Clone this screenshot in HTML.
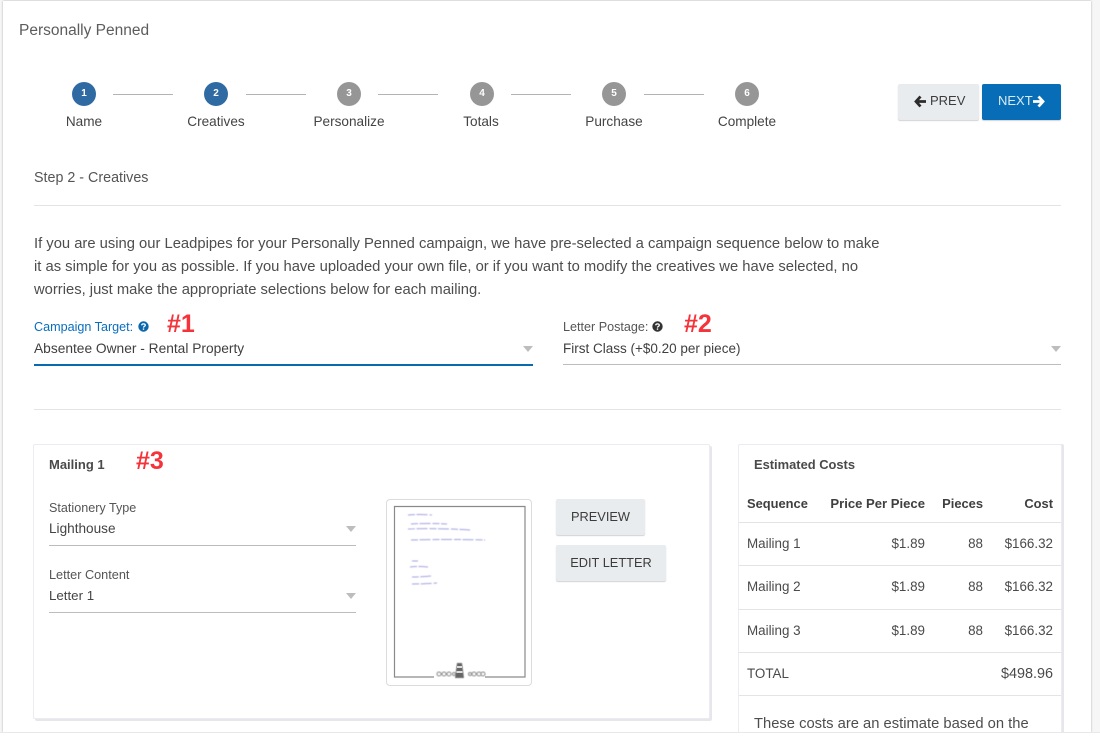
<!DOCTYPE html>
<html><head><meta charset="utf-8"><style>
html,body{margin:0;padding:0;width:1100px;height:738px;overflow:hidden;background:#fff}
body{position:relative;font-family:"Liberation Sans",sans-serif;color:#4a4a4a;font-size:13.5px}
.a{position:absolute;white-space:nowrap;line-height:16px}
.b{position:absolute}
.c{position:absolute;width:24px;height:24px;border-radius:50%;top:82px;color:#fff;font-size:10px;font-weight:bold;text-align:center;line-height:23px}
.l{position:absolute;top:94px;width:60px;height:1px;background:#b3b3b3}
.s{width:100px;text-align:center;top:114px;color:#444;font-size:13.6px}
.h{height:1px;background:#e4e4e6}
.tri{position:absolute;width:0;height:0;border-left:5.5px solid transparent;border-right:5.5px solid transparent;border-top:6px solid #bdbdbd}
.btn{position:absolute;background:#e9ecef;border-radius:2px;box-shadow:0 1px 1px rgba(0,0,0,.18);color:#3c3c3c;font-size:12.8px;text-align:center;height:36px;line-height:35px}
.r{text-align:right}
.th{font-weight:bold;color:#3f3f3f;top:496px;font-size:12.9px}
.td{color:#4a4a4a;font-size:13.4px}
.red{color:#f5333a;font-weight:bold;font-size:25px;line-height:28px}
</style></head><body>
<div class="b" style="left:0;top:0;width:1100px;height:738px;background:#f6f6f7"></div>
<div class="b" style="left:3px;top:1px;width:1088px;height:731px;background:#fff;box-shadow:0 0 2px rgba(0,0,0,.3)"></div>

<div class="a" style="left:19px;top:23px;font-size:15.5px;color:#5c5c5c">Personally Penned</div>

<div class="c" style="left:72px;background:#2f6aa3">1</div>
<div class="c" style="left:204px;background:#2f6aa3">2</div>
<div class="c" style="left:337px;background:#969696">3</div>
<div class="c" style="left:470px;background:#969696">4</div>
<div class="c" style="left:602px;background:#969696">5</div>
<div class="c" style="left:735px;background:#969696">6</div>
<div class="l" style="left:113px"></div>
<div class="l" style="left:246px"></div>
<div class="l" style="left:378px"></div>
<div class="l" style="left:511px"></div>
<div class="l" style="left:644px"></div>
<div class="a s" style="left:34px">Name</div>
<div class="a s" style="left:166px">Creatives</div>
<div class="a s" style="left:299px">Personalize</div>
<div class="a s" style="left:431px">Totals</div>
<div class="a s" style="left:564px">Purchase</div>
<div class="a s" style="left:697px">Complete</div>

<div class="b" style="left:898px;top:84px;width:81px;height:36px;background:#e9ecef;border-radius:2px;box-shadow:0 1px 1px rgba(0,0,0,.18)"></div>
<svg class="b" style="left:914px;top:95px" width="13" height="13" viewBox="0 0 13 13"><path d="M6.500 1.500 2 6.500 6.500 11.500M2.500 6.500H12" fill="none" stroke="#2c2c2c" stroke-width="2.800"/></svg>
<div class="a" style="left:930px;top:93px;font-size:13px;color:#3c3c3c">PREV</div>
<div class="b" style="left:982px;top:84px;width:79px;height:36px;background:#076db6;border-radius:2px;box-shadow:0 1px 1px rgba(0,0,0,.18)"></div>
<div class="a" style="left:998px;top:93px;font-size:13px;color:#d9eaf6">NEXT</div>
<svg class="b" style="left:1032px;top:95px" width="13" height="13" viewBox="0 0 13 13"><path d="M6.500 1.500 11 6.500 6.500 11.500M10.500 6.500H1" fill="none" stroke="#fff" stroke-width="2.800"/></svg>

<div class="a" style="left:34px;top:170px;font-size:14.3px;color:#555">Step 2 - Creatives</div>
<div class="b h" style="left:34px;top:205px;width:1027px"></div>

<div class="a" style="left:34px;top:233px;font-size:14.78px;color:#4d4d4d;line-height:23px">If you are using our Leadpipes for your Personally Penned campaign, we have pre-selected a campaign sequence below to make<br>it as simple for you as possible. If you have uploaded your own file, or if you want to modify the creatives we have selected, no<br>worries, just make the appropriate selections below for each mailing.</div>

<div class="a" style="left:34px;top:319px;font-size:12.6px;color:#0a6ebd">Campaign Target:</div>
<svg class="b" style="left:138px;top:321px" width="11" height="11" viewBox="0 0 11 11"><circle cx="5.500" cy="5.500" r="5.200" fill="#0a67ad"/><path d="M3.700 4.300C3.800 2.400 7.300 2.400 7.300 4.200 7.300 5.400 5.500 5.300 5.500 6.600" fill="none" stroke="#fff" stroke-width="1.300"/><rect x="4.800" y="7.400" width="1.400" height="1.400" fill="#fff"/></svg>
<div class="a red" style="left:167px;top:310px">#1</div>
<div class="a" style="left:34px;top:341px;font-size:13.75px;color:#3f3f3f">Absentee Owner - Rental Property</div>
<div class="tri" style="left:523px;top:346px"></div>
<div class="b" style="left:34px;top:364px;width:499px;height:2px;background:#0a6ab0"></div>

<div class="a" style="left:563px;top:319px;font-size:12.6px;color:#555">Letter Postage:</div>
<svg class="b" style="left:652px;top:321px" width="11" height="11" viewBox="0 0 11 11"><circle cx="5.500" cy="5.500" r="5.200" fill="#333"/><path d="M3.700 4.300C3.800 2.400 7.300 2.400 7.300 4.200 7.300 5.400 5.500 5.300 5.500 6.600" fill="none" stroke="#fff" stroke-width="1.300"/><rect x="4.800" y="7.400" width="1.400" height="1.400" fill="#fff"/></svg>
<div class="a red" style="left:684px;top:310px">#2</div>
<div class="a" style="left:563px;top:341px;font-size:13.5px;color:#3f3f3f">First Class (+$0.20 per piece)</div>
<div class="tri" style="left:1051px;top:346px"></div>
<div class="b" style="left:563px;top:364px;width:498px;height:1px;background:#bcbcbc"></div>

<div class="b h" style="left:34px;top:409px;width:1027px"></div>

<div class="b" style="left:33px;top:444px;width:675px;height:273px;background:#fff;border:1px solid #ececf0;border-radius:2px;box-shadow:2px 2px 0 #e6e6ec"></div>
<div class="a" style="left:49px;top:457px;font-size:13px;font-weight:bold;color:#4a4a4a">Mailing 1</div>
<div class="a red" style="left:136px;top:447px">#3</div>

<div class="a" style="left:49px;top:500px;font-size:12.6px;color:#555">Stationery Type</div>
<div class="a" style="left:49px;top:521px;font-size:13.6px;color:#444">Lighthouse</div>
<div class="tri" style="left:346px;top:526px"></div>
<div class="b" style="left:49px;top:545px;width:307px;height:1px;background:#bcbcbc"></div>
<div class="a" style="left:49px;top:567px;font-size:12.7px;color:#555">Letter Content</div>
<div class="a" style="left:49px;top:588px;font-size:13.3px;color:#444">Letter 1</div>
<div class="tri" style="left:346px;top:593px"></div>
<div class="b" style="left:49px;top:612px;width:307px;height:1px;background:#bcbcbc"></div>

<div class="b" style="left:386px;top:499px;width:144px;height:185px;border:1px solid #dcdcdc;border-radius:4px;background:#fff"></div>
<svg class="b" style="left:386px;top:499px" width="146" height="187" viewBox="0 0 146 187">
<defs><filter id="f" x="-5%" y="-20%" width="110%" height="140%"><feGaussianBlur stdDeviation=".5"/></filter></defs>
<path d="M48 178H8.500V7.500H139V178H99" fill="none" stroke="#8a8a8a" stroke-width="1.200"/>
<g fill="none" stroke="#a3a3e0" stroke-width="1" stroke-dasharray="7 1.500 11 2" filter="url(#f)">
<path d="M22 16q12 -1 24 0"/>
<path d="M25 25q18 -1 36 0"/>
<path d="M22 30q31 -1 62 1"/>
<path d="M25 41q37 -1 74 0"/>
<path d="M26 62h6"/>
<path d="M24 68q9 -1 18 0"/>
<path d="M26 78q9 0 19 -1"/>
<path d="M26 85q13 0 25 -1"/>
</g>
<g fill="none" stroke="#888" stroke-width="1" filter="url(#f)">
<circle cx="53" cy="175" r="2"/><circle cx="58" cy="175" r="2"/><circle cx="63" cy="175" r="2"/><circle cx="68" cy="175" r="1.500"/>
<circle cx="84" cy="175" r="1.500"/><circle cx="88" cy="175" r="2"/><circle cx="93" cy="175" r="2"/><circle cx="97" cy="175" r="2"/>
</g>
<path d="M71 164h5l2 15h-9z" fill="#666" filter="url(#f)"/><rect x="71" y="167" width="5" height="2" fill="#ddd"/><rect x="70.500" y="172" width="6" height="2" fill="#ddd"/>
</svg>

<div class="btn" style="left:556px;top:499px;width:89px">PREVIEW</div>
<div class="btn" style="left:556px;top:545px;width:110px">EDIT LETTER</div>

<div class="b" style="left:738px;top:444px;width:322px;height:290px;background:#fff;border:1px solid #ececf0;border-bottom:0;border-radius:2px;box-shadow:2px 0 0 #e6e6ec"></div>
<div class="a" style="left:754px;top:457px;font-size:12.9px;font-weight:bold;color:#4a4a4a">Estimated Costs</div>
<div class="a th" style="left:747px">Sequence</div>
<div class="a th r" style="right:175px;font-size:13.1px">Price Per Piece</div>
<div class="a th r" style="right:117px">Pieces</div>
<div class="a th r" style="right:47px">Cost</div>
<div class="b h" style="left:739px;top:522px;width:322px"></div>
<div class="b h" style="left:739px;top:565px;width:322px"></div>
<div class="b h" style="left:739px;top:609px;width:322px"></div>
<div class="b h" style="left:739px;top:652px;width:322px"></div>
<div class="b h" style="left:739px;top:695px;width:322px"></div>

<div class="a td" style="left:747px;top:536px">Mailing 1</div><div class="a td r" style="right:175px;top:536px">$1.89</div><div class="a td r" style="right:117px;top:536px">88</div><div class="a td r" style="right:47px;top:536px">$166.32</div>
<div class="a td" style="left:747px;top:579px">Mailing 2</div><div class="a td r" style="right:175px;top:579px">$1.89</div><div class="a td r" style="right:117px;top:579px">88</div><div class="a td r" style="right:47px;top:579px">$166.32</div>
<div class="a td" style="left:747px;top:623px">Mailing 3</div><div class="a td r" style="right:175px;top:623px">$1.89</div><div class="a td r" style="right:117px;top:623px">88</div><div class="a td r" style="right:47px;top:623px">$166.32</div>
<div class="a td" style="left:747px;top:666px">TOTAL</div><div class="a td r" style="right:47px;top:666px;font-size:14.4px">$498.96</div>
<div class="a" style="left:754px;top:716px;font-size:14.75px;color:#4d4d4d">These costs are an estimate based on the</div>
<div class="b" style="left:0;top:732px;width:1100px;height:6px;background:#fff;border-top:1px solid #e8e8e8"></div>
</body></html>
